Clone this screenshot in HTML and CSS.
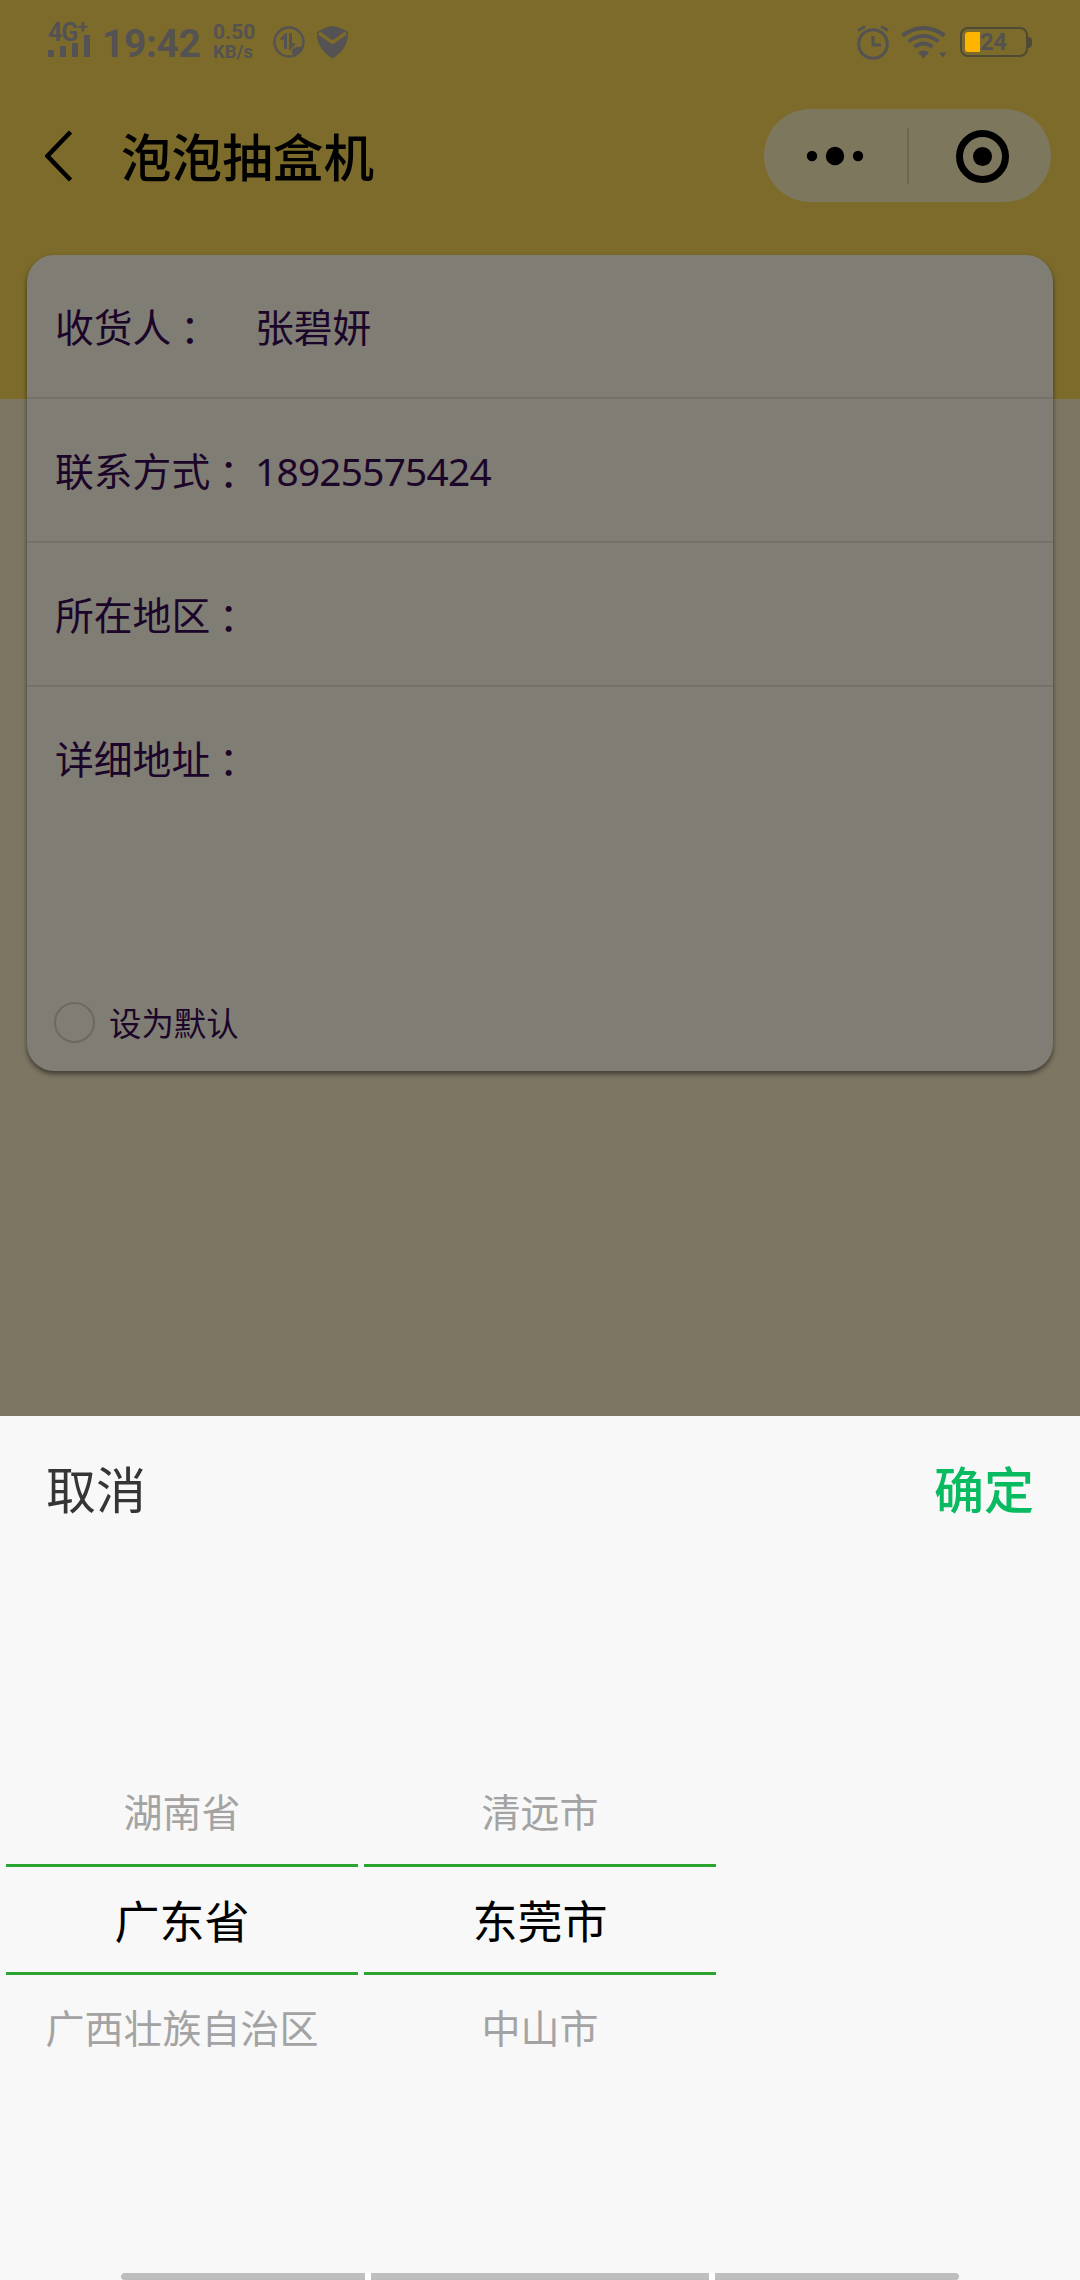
FILE: index.html
```html
<!DOCTYPE html>
<html lang="zh-CN">
  <head>
    <meta charset="UTF-8" />
    <meta name="viewport" content="width=device-width, initial-scale=1.0" />
    <title>泡泡抽盒机</title>
    <link rel="stylesheet" href="styles.css">
  </head>
  <body>
    <div class="page">
      <!-- 状态栏 -->
      <div class="status">
        <div class="signal">
          <span class="net">4G<sup>+</sup></span>
          <svg width="42" height="22" viewBox="0 0 42 22"><path d="M0 15h6v7H0zM12 11h6v11h-6zM24 8h6v14h-6zM36 0h6v22h-6z"/></svg>
        </div>
        <div class="time">19:42</div>
        <div class="speed"><span>0.50</span><span>KB/s</span></div>
        <svg class="traffic" width="32" height="32" viewBox="0 0 32 32">
          <circle cx="16" cy="16" r="14.500" class="line thin"/>
          <path d="M8 13.500l4.500-4V23M17.500 7v14.500l4-4" class="line"/>
          <path d="M18.500 26q1-6 11-5l-4 6-5 2z"/>
        </svg>
        <svg class="shield" width="33" height="33" viewBox="0 0 33 33">
          <path d="M16.500 0Q24 1 32 6Q33 22 16.500 32.500Q0 22 1 6Q9 1 16.500 0z"/>
          <path d="M3 7l13.500 9.500L30 7" class="tick"/>
        </svg>
        <div class="status-right">
          <svg class="alarm" width="32" height="36" viewBox="0 0 32 36">
            <circle cx="16" cy="19" r="14.300" class="line"/>
            <path d="M16 11v9h8M1 5.500L8 1.500M31 5.500L24 1.500" class="line"/>
          </svg>
          <svg class="wifi" width="46" height="33" viewBox="0 0 46 33">
            <path d="M1.500 9.500Q22.500-5.500 43.500 9.500M7.500 15.500Q22.500 4.500 37.500 15.500M13.500 21Q22.500 14 31.500 21" class="arc"/>
            <path d="M17 26.500q5.500-4 11 0L22.500 32.500zM38 26.500h7.500L42 31.500z"/>
          </svg>
          <div class="battery"><i></i><span>24</span></div>
        </div>
      </div>
      <!-- 导航栏 -->
      <div class="nav">
        <svg class="back" width="28" height="52" viewBox="0 0 28 52"><path d="M25.500 2L2.500 26L25.500 50"/></svg>
        <h1 class="title">泡泡抽盒机</h1>
        <div class="capsule">
          <svg width="143" height="93" viewBox="0 0 143 93"><circle cx="48" cy="47" r="5.200"/><circle cx="71" cy="47" r="9.200"/><circle cx="94" cy="47" r="5.200"/></svg>
          <i class="divider"></i>
          <svg width="142" height="93" viewBox="0 0 142 93"><circle cx="73.500" cy="47.500" r="23" class="ring"/><circle cx="73.500" cy="47.500" r="9.500"/></svg>
        </div>
      </div>
      <!-- 收货地址表单 -->
      <div class="card">
        <div class="row"><div class="label">收货人<b lang="zh-TW">：</b></div><div class="value">张碧妍</div></div>
        <div class="row"><div class="label">联系方式<b lang="zh-TW">：</b></div><div class="value phone">18925575424</div></div>
        <div class="row"><div class="label">所在地区<b lang="zh-TW">：</b></div><div class="value"></div></div>
        <div class="row last"><div class="label">详细地址<b lang="zh-TW">：</b></div><div class="value"></div></div>
        <div class="default"><i class="radio"></i><span>设为默认</span></div>
      </div>
    </div>
    <!-- 地区选择 -->
    <div class="sheet">
      <div class="sheet-head">
        <span class="cancel">取消</span>
        <span class="confirm">确定</span>
      </div>
      <div class="picker">
        <ul class="col">
          <li>湖南省</li>
          <li class="active">广东省</li>
          <li>广西壮族自治区</li>
        </ul>
        <ul class="col">
          <li>清远市</li>
          <li class="active">东莞市</li>
          <li>中山市</li>
        </ul>
        <ul class="col"></ul>
      </div>
      <div class="gesture"><i></i><i></i><i></i></div>
    </div>
  </body>
</html>
```
FILE: styles.css
```css
* {
  margin: 0;
  padding: 0;
  box-sizing: border-box;
}
body {
  width: 1080px;
  height: 2280px;
  overflow: hidden;
  display: flex;
  flex-direction: column;
  font-family: "Noto Sans CJK SC", sans-serif;
}
ul {
  list-style: none;
}
svg {
  display: block;
  flex: none;
}
.page {
  height: 1416px;
  background: linear-gradient(#7c6b2a 399px, #7d7663 399px);
}
/* 状态栏 */
.status {
  height: 85px;
  padding: 0 48px;
  display: flex;
  align-items: flex-start;
  font-family: Roboto, sans-serif;
  font-weight: bold;
  color: #545252;
  fill: #545252;
}
.signal {
  width: 54px;
  padding-top: 22px;
}
.net {
  display: block;
  height: 13px;
  font-size: 25px;
  line-height: 22px;
  letter-spacing: -1px;
}
.net sup {
  font-size: 19px;
  line-height: 0;
  vertical-align: 8px;
}
.time {
  width: 111px;
  padding-top: 21px;
  font-size: 39px;
  line-height: 46px;
  letter-spacing: -0.4px;
}
.speed {
  width: 60px;
  padding-top: 22px;
  display: flex;
  flex-direction: column;
  font-size: 21px;
  line-height: 20px;
}
.speed span + span {
  font-size: 18.5px;
  line-height: 20px;
}
.line {
  fill: none;
  stroke: #545252;
  stroke-width: 3;
}
.thin {
  stroke-width: 2.4;
}
.traffic {
  margin-top: 26px;
}
.shield {
  margin: 26px 0 0 11px;
}
.tick {
  fill: none;
  stroke: #7c6b2a;
  stroke-width: 3.4;
}
.status-right {
  margin-left: auto;
  display: flex;
}
.alarm {
  margin-top: 25px;
}
.wifi {
  margin: 26px 0 0 12px;
}
.arc {
  fill: none;
  stroke: #545252;
  stroke-width: 4;
}
.battery {
  position: relative;
  width: 68px;
  height: 30px;
  margin: 27px 4px 0 13px;
  padding: 3px;
  display: flex;
  border: 2px solid #4f4a36;
  border-radius: 8px;
}
/* 电池正极 */
.battery::after {
  content: "";
  position: absolute;
  top: 8px;
  right: -6px;
  width: 4px;
  height: 11px;
  border-radius: 0 4px 4px 0;
  background: #4f4a36;
}
.battery i {
  width: 15px;
  height: 20px;
  border-radius: 3px 0 0 3px;
  background: #ffb400;
}
.battery span {
  font-size: 24px;
  line-height: 20px;
  letter-spacing: -0.5px;
}
/* 导航栏 */
.nav {
  height: 145px;
  padding: 23px 29px 0 45px;
  display: flex;
  align-items: flex-start;
}
.back {
  margin-top: 22px;
  fill: none;
  stroke: #000;
  stroke-width: 4.5;
}
.title {
  margin: 10px 0 0 48px;
  font-size: 50.6px;
  font-weight: 500;
  line-height: 74px;
}
.capsule {
  width: 287px;
  height: 93px;
  margin-top: 1px;
  margin-left: auto;
  display: flex;
  align-items: center;
  border-radius: 47px;
  background: #7d775d;
}
.divider {
  width: 2px;
  height: 56px;
  background: #6d6853;
}
.ring {
  fill: none;
  stroke: #000;
  stroke-width: 7;
}
/* 表单卡片 */
.card {
  width: 1026px;
  height: 816px;
  margin: 25px auto 0;
  display: flex;
  flex-direction: column;
  border-radius: 27px;
  background: #807d75;
  box-shadow: 0 3px 5px rgba(0, 0, 0, 0.5);
  color: #1b0529;
  font-size: 38.8px;
  line-height: 58px;
}
.row {
  height: 144px;
  padding: 0 0 2px 28px;
  display: flex;
  align-items: center;
  border-bottom: 2px solid #74716a;
}
.row.last {
  border-bottom: none;
  padding-bottom: 4px;
}
.label {
  width: 200px;
}
/* 冒号居中显示 */
.label b {
  position: relative;
  top: 3px;
  left: -1px;
  font-family: "Noto Sans CJK TC", sans-serif;
  font-weight: normal;
}
.phone {
  padding-top: 3px;
  font-family: "Noto Sans", sans-serif;
  letter-spacing: -0.75px;
}
.default {
  margin-top: auto;
  height: 97px;
  padding: 0 0 1px 27px;
  display: flex;
  align-items: center;
  font-size: 32.4px;
  line-height: 46px;
}
.radio {
  width: 41px;
  height: 41px;
  margin-right: 14px;
  border: 2px solid #6c6962;
  border-radius: 50%;
}
/* 底部弹层 */
.sheet {
  flex: 1;
  display: flex;
  flex-direction: column;
  background: #f8f8f8;
}
.sheet-head {
  height: 150px;
  padding: 0 46px 9px;
  display: flex;
  justify-content: space-between;
  align-items: center;
  font-size: 50px;
}
.cancel {
  color: #353535;
}
.confirm {
  color: #09bb60;
  font-weight: 500;
}
.picker {
  padding: 190px 6px 0;
  display: grid;
  grid-template-columns: repeat(3, 352px);
  gap: 6px;
}
.col li {
  height: 108px;
  line-height: 108px;
  text-align: center;
  font-size: 39px;
  color: #a3a3a3;
  white-space: nowrap;
}
.col .active {
  height: 111px;
  border-top: 3px solid #2ba52f;
  border-bottom: 3px solid #2ba52f;
  line-height: 106px;
  font-size: 45px;
  color: #000;
}
.col .active + li {
  line-height: 102px;
}
/* 手势条 */
.gesture {
  height: 7px;
  margin: auto 121px 0;
  display: grid;
  grid-template-columns: 244px 338px 244px;
  gap: 6px;
  background: #fff;
}
.gesture i {
  background: #bebebe;
}
.gesture i:first-child {
  border-radius: 4px 0 0 4px;
}
.gesture i:last-child {
  border-radius: 0 4px 4px 0;
}
```
